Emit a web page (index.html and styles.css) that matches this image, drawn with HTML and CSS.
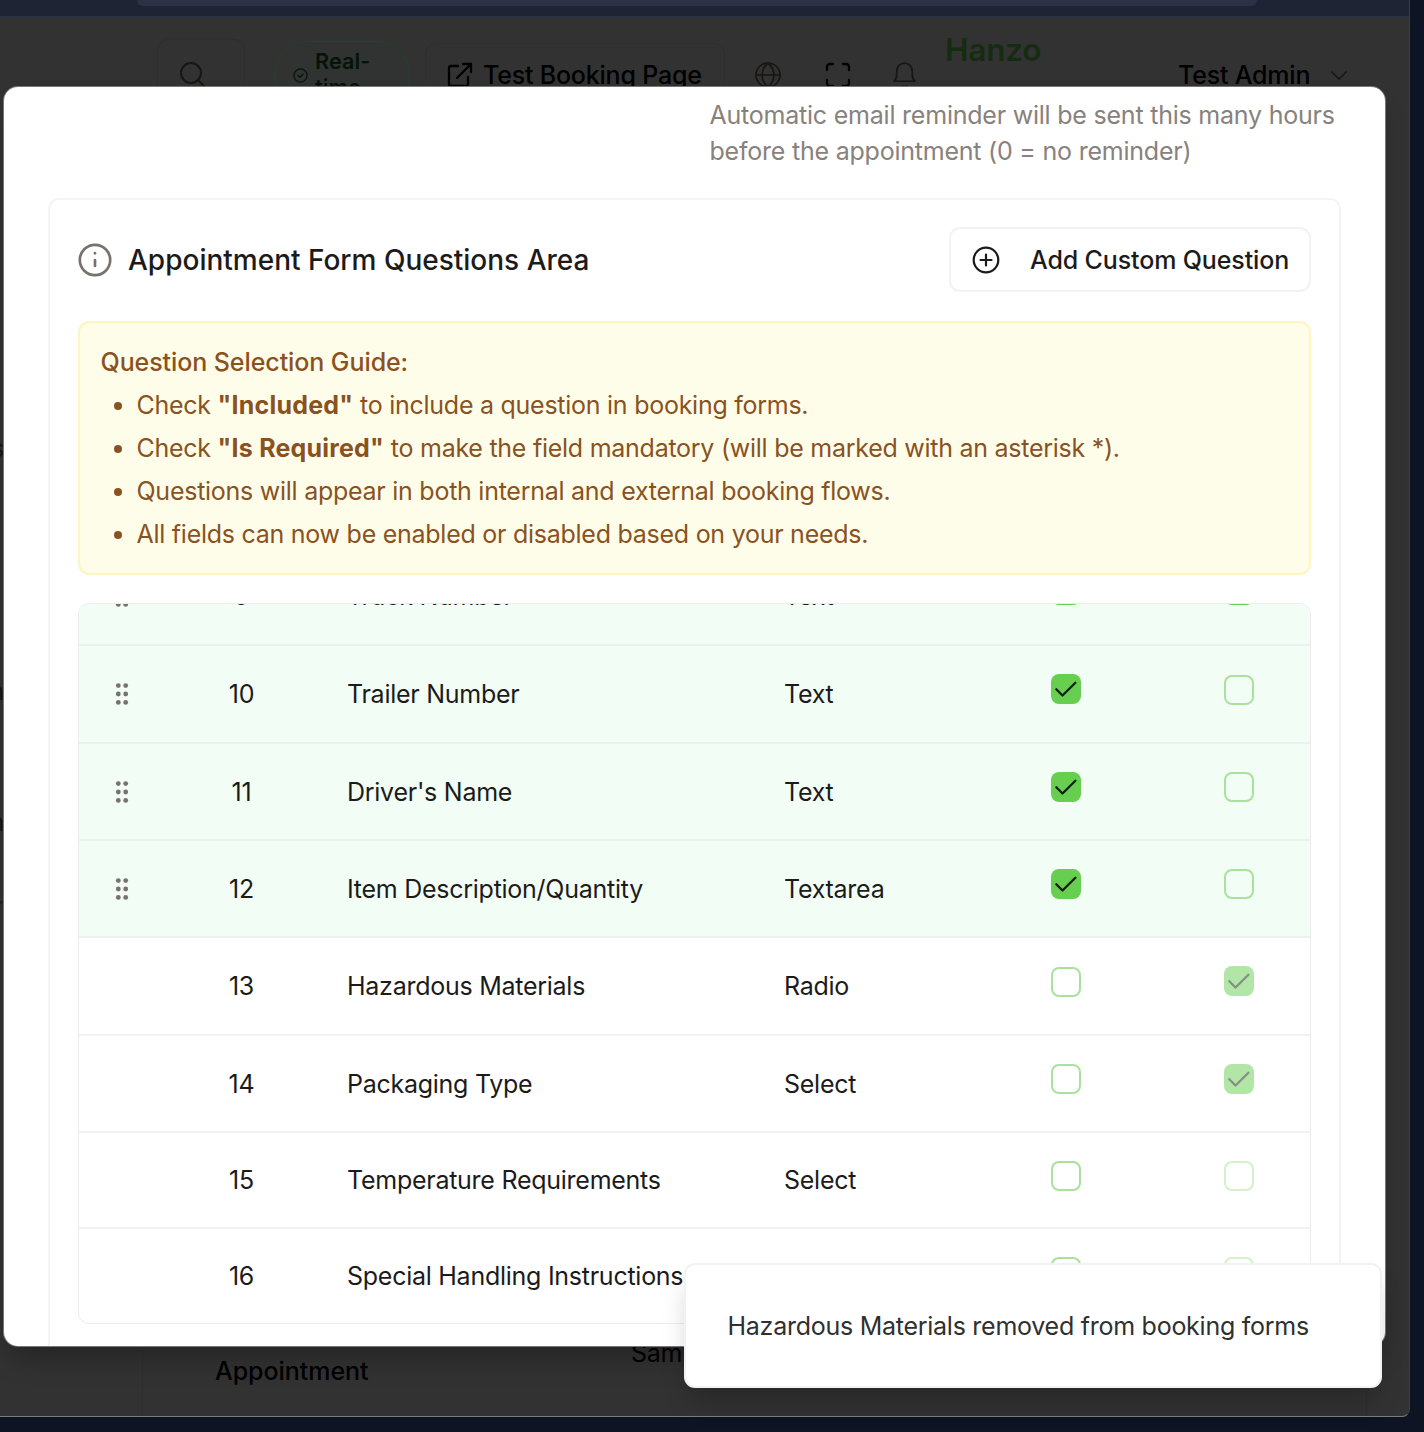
FILE: index.html
```html
<!DOCTYPE html>
<html lang="en">
<head>
<meta charset="utf-8">
<title>Appointment Form Questions</title>
<link rel="stylesheet" href="styles.css">
</head>
<body>
<div class="window">
  <div class="chrome"><div class="address"></div></div>
  <div class="page">
    <header class="topbar">
      <div class="search"><svg class="i-search" viewBox="0 0 24 24"><circle cx="11" cy="11" r="10"/><path d="M18 18l6 6"/></svg></div>
      <div class="live">
        <svg class="i-live" viewBox="0 0 24 24"><circle cx="12" cy="12" r="10.5"/><path d="M8 12l3 3 5-5"/></svg>
        <span>Real-<br>time</span>
      </div>
      <div class="test"><svg class="i-ext" viewBox="0 0 24 24"><path d="M10 3H3a2 2 0 0 0-2 2v16a2 2 0 0 0 2 2h15a2 2 0 0 0 2-2v-7M15 1h8v8M23 1L9 15"/></svg><span class="test-label">Test Booking Page</span></div>
      <svg class="i-globe" viewBox="0 0 26 26"><circle cx="13" cy="13" r="12"/><path d="M1 13h24M13 1c-8 7-8 17 0 24M13 1c8 7 8 17 0 24"/></svg>
      <svg class="i-full" viewBox="0 0 24 24"><path d="M1 7V4a3 3 0 0 1 3-3h3M17 1h3a3 3 0 0 1 3 3v3M23 17v3a3 3 0 0 1-3 3h-3M7 23H4a3 3 0 0 1-3-3v-3"/></svg>
      <svg class="i-bell" viewBox="0 0 24 28"><path d="M1 20c3-2 3-6 3-11a8 8 0 0 1 16 0c0 5 0 9 3 11zM10 25a2.4 2.4 0 0 0 4 0"/></svg>
      <span class="brand">Hanzo</span>
      <span class="user">Test Admin</span>
      <svg class="i-chev" viewBox="0 0 18 10"><path d="M1 1l8 8 8-8"/></svg>
    </header>
    <nav class="side"><span>s</span><span>n</span><span>n</span><span class="active">r</span></nav>
    <main class="under"><span class="appt">Appointment</span><span class="sample">Sample</span></main>
  </div>
</div>

<section class="modal">
  <p class="hint">Automatic email reminder will be sent this many hours before the appointment (0 = no reminder)</p>
  <div class="card">
    <div class="card-head">
      <svg class="i-info" viewBox="0 0 34 34"><circle cx="17" cy="17" r="15.2"/><path d="M17 17v6"/><path d="M17 10.200v.1"/></svg>
      <h2>Appointment Form Questions Area</h2>
      <button class="add" type="button"><svg class="i-plus" viewBox="0 0 28 28"><circle cx="14" cy="14" r="12.300"/><path d="M8.500 14h11M14 8.500v11"/></svg><span>Add Custom Question</span></button>
    </div>
    <div class="guide">
      <p class="guide-title">Question Selection Guide:</p>
      <ul>
        <li>Check <b>"Included"</b> to include a question in booking forms.</li>
        <li>Check <b>"Is Required"</b> to make the field mandatory (will be marked with an asterisk *).</li>
        <li>Questions will appear in both internal and external booking flows.</li>
        <li>All fields can now be enabled or disabled based on your needs.</li>
      </ul>
    </div>
    <div class="table" id="table"></div>
  </div>
</section>
<div class="toast">Hazardous Materials removed from booking forms</div>
<script src="rows.js"></script>
</body>
</html>
```
FILE: rows.js
```js
const rows = [
  [9, "Truck Number", "Text", "on", "on", true, 98],
  [10, "Trailer Number", "Text", "on", "off", true, 98],
  [11, "Driver's Name", "Text", "on", "off", true, 97],
  [12, "Item Description/Quantity", "Textarea", "on", "off", true, 97],
  [13, "Hazardous Materials", "Radio", "off", "on disabled", false, 98],
  [14, "Packaging Type", "Select", "off", "on disabled", false, 97],
  [15, "Temperature Requirements", "Select", "off", "off disabled", false, 96],
  [16, "Special Handling Instructions", "Select", "off", "off disabled", false, 94]
];
const grip = '<svg class="grip" viewBox="0 0 14 24">' +
  [3.6, 12, 20.4].map(y => `<circle cx="3.300" cy="${y}" r="2.400"/><circle cx="10.700" cy="${y}" r="2.400"/>`).join("") + "</svg>";
const box = state => `<span class="box ${state}">` +
  (state.startsWith("on") ? '<svg viewBox="0 0 30 30"><path d="M5.300 15.300l6.200 6.200L24.400 8.800"/></svg>' : "") + "</span>";
document.getElementById("table").innerHTML = rows.map(([n, name, type, inc, req, included, h]) =>
  `<div class="row${included ? " included" : ""}" style="height:${h}px">
    <span class="cell-grip">${included ? grip : ""}</span><span class="num">${n}</span>
    <span>${name}</span><span>${type}</span>${box(inc)}${box(req)}</div>`).join("");
```
FILE: styles.css
```css
* { box-sizing: border-box; }
body {
  margin: 0; width: 1424px; height: 1432px; overflow: hidden; position: relative;
  background: #0e1424; color: #1c1b1a;
  font-family: Inter, "Liberation Sans", sans-serif; font-size: 25px; letter-spacing: -.26px;
}
p, h2, ul { margin: 0; }
svg { display: block; flex: none; fill: none; stroke: currentColor; stroke-linecap: round; stroke-linejoin: round; overflow: visible; }

.window { width: 1410px; height: 1417px; border-right: 1px solid #3c3d42; border-bottom: 1px solid #7c7d7f; border-radius: 0 0 8px 0; overflow: hidden; background: #323232; }
.chrome { height: 17px; background: #1e2433; border-bottom: 1px solid #29304a; }
.address { width: 1120px; height: 6px; margin-left: 137px; background: #2d3145; border-radius: 0 0 8px 8px; }
.page { height: 1399px; display: flex; flex-direction: column; justify-content: space-between; }
.topbar { height: 116px; display: flex; align-items: center; padding-left: 157px; color: #000; font-weight: 500; letter-spacing: -.2px; }
.search { width: 88px; height: 73px; border: 1px solid #2e2e2e; border-radius: 11px; padding: 22px 0 0 22px; color: #171615; }
.i-search { width: 24px; height: 24px; stroke-width: 2; }
.live { width: 136px; height: 69px; margin-left: 29px; padding: 0 0 0 18px; display: flex; align-items: center; gap: 7px; border: 1px solid #26402c; border-radius: 35px; background: #303331; color: #04140a; font-size: 21.600px; font-weight: 600; line-height: 26px; letter-spacing: .1px; }
.live span { margin-bottom: 3px; }
.i-live { width: 15px; height: 15px; stroke-width: 2; }
.test { width: 300px; height: 65px; margin-left: 15px; padding-left: 22px; display: flex; align-items: center; gap: 11px; border: 1px solid #2e2e2e; border-radius: 11px; }
.i-ext { width: 24px; height: 24px; stroke-width: 2.300; }
.i-globe { width: 26px; height: 26px; margin-left: 30px; stroke-width: 1.700; color: #171615; }
.i-full { width: 24px; height: 24px; margin-left: 45px; stroke-width: 2.300; }
.i-bell { width: 23px; height: 27px; margin-left: 43px; stroke-width: 1.800; color: #171615; }
.brand { width: 233px; margin: -52px 0 0 29px; color: #142c10; font-size: 31.500px; font-weight: 600; }
.i-chev { width: 16px; height: 9px; margin-left: 21px; stroke-width: 1.800; color: #171615; }
.side { width: 4px; flex: 1; padding-top: 300px; display: flex; flex-direction: column; color: #151515; line-height: 30px; }
.side span { height: 30px; display: flex; justify-content: flex-end; margin-bottom: 213px; }
.side span:nth-child(2) { margin-bottom: 101px; }
.side span:nth-child(3) { margin-bottom: 54px; }
.side .active { color: #142c10; margin: 0; }
.under { height: 82px; margin-left: 142px; margin-right: 42px; border-left: 1px solid #2e2e2e; border-right: 1px solid #2e2e2e; padding: 22px 0 0 72px; display: flex; color: #000; line-height: 30px; }
.appt { width: 416px; font-weight: 500; letter-spacing: -.05px; }
.sample { margin-top: -18px; }

.modal { position: absolute; left: 4px; top: 87px; width: 1381px; height: 1259px; overflow: hidden; background: #fff; border-radius: 14px; padding: 10px 44px 0; box-shadow: 0 0 0 1px #777, 0 18px 27px -6px #0004; }
.hint { margin-left: 661.500px; width: 632px; color: #88817c; line-height: 36px; letter-spacing: -.22px; }
.card { margin-top: 29px; height: 1180px; border: 2px solid #f4f4f4; border-radius: 11px; padding: 27px 28px 0; }
.card-head { display: flex; align-items: center; height: 65px; }
.i-info { width: 34px; height: 34px; stroke-width: 2.700; color: #78716c; }
h2 { margin-left: 16px; font-size: 28px; font-weight: 500; letter-spacing: 0; }
.add { margin-left: auto; width: 362px; height: 65px; padding: 0 0 0 21px; display: flex; align-items: center; gap: 30px; background: #fff; border: 2px solid #f2f2f2; border-radius: 11px; font: inherit; font-weight: 500; letter-spacing: -.13px; color: inherit; white-space: nowrap; }
.i-plus { width: 28px; height: 28px; stroke-width: 2.200; }
.guide { margin-top: 29px; height: 254px; padding: 18px 20.500px; border: 2px solid #fff5be; border-radius: 11px; background: #fefdea; color: #8a5220; line-height: 43px; white-space: nowrap; }
.guide-title { font-weight: 500; letter-spacing: -.08px; }
ul { padding-left: 36px; }
.guide b { font-weight: 700; letter-spacing: .2px; }
.table { margin-top: 28px; height: 721px; border: 1px solid #ececec; border-radius: 11px; overflow: hidden; display: flex; flex-direction: column; justify-content: flex-end; }
.row { flex: none; display: grid; grid-template-columns: 86px 182px 437px 267px 173px 88px; align-items: center; border-bottom: 2px solid #f2f2f1; white-space: nowrap; }
.row:last-child { border-bottom: 0; }
.included { background: #f2fdf5; border-color: #ebf1ed; }
.cell-grip { display: flex; justify-content: center; }
.grip { width: 14px; height: 24px; fill: #78716c; stroke: none; }
.num { padding-left: 37px; width: 116px; text-align: center; }
.row > .box { margin: -9px 0 0; }
.row > .box.on { margin-top: -10px; }
.row:first-child > .box { margin-top: -12px; }
.box { width: 30px; height: 30px; border: 2px solid #aae29d; border-radius: 8px; }
.box.on { background: #68ce50; border: 0; color: #10210c; }
.box.on svg { width: 30px; height: 30px; stroke-width: 2.300; }
.box.disabled { opacity: .5; }

.toast { position: absolute; left: 684px; top: 1263px; width: 698px; height: 125px; padding-left: 41.500px; display: flex; align-items: center; background: #fff; border: 2px solid #f2f2f2; border-radius: 11px; color: #30302f; box-shadow: 0 18px 27px -5px #0003; white-space: nowrap; }
```
